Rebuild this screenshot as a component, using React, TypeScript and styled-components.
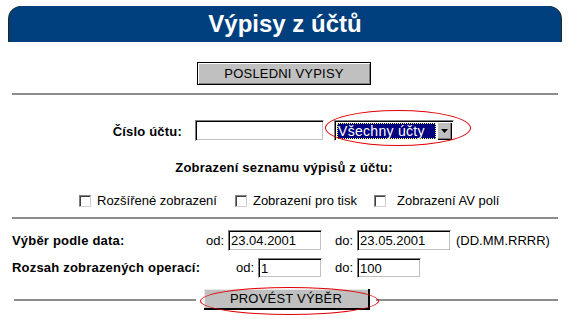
import React from "react";
import styled, { createGlobalStyle } from "styled-components";

const Global = createGlobalStyle`
  html, body { margin: 0; padding: 0; background: #fff; }
  body { font-family: "Liberation Sans", Arial, sans-serif; color: #000; }
`;

const Page = styled.div`
  width: 568px;
  height: 319px;
  overflow: hidden;
  position: relative;
`;

const Header = styled.div`
  margin: 6px 7px 0 9px;
  height: 36px;
  background: #003f7e;
  border-radius: 13px 13px 0 0;
  box-shadow: -1px 0 0 #1b2b1b, 1px 0 0 #1b2b1b;
  display: flex;
  align-items: center;
  justify-content: center;
  color: #fff;
  font-weight: bold;
  font-size: 24px;
`;

const Center = styled.div<{ $top: number }>`
  display: flex;
  justify-content: center;
  align-items: center;
  margin-top: ${(p) => p.$top}px;
`;

const WinButton = styled.div<{ $w: number; $h: number }>`
  width: ${(p) => p.$w}px;
  height: ${(p) => p.$h}px;
  box-sizing: border-box;
  background: #c0c0c0;
  border: 1px solid #000;
  box-shadow: inset 1px 1px #fff, inset -1px -1px #808080;
  display: flex;
  align-items: center;
  justify-content: center;
  font-size: 13px;
  letter-spacing: 0.2px;
`;

const Rule = styled.div<{ $top: number }>`
  margin: ${(p) => p.$top}px 10px 0 12px;
  height: 0;
  border-top: 2px solid #8c8c8c;
`;

const Label = styled.span`
  font-weight: bold;
  font-size: 13px;
  letter-spacing: 0.2px;
  white-space: nowrap;
`;

const LabelBox = styled.div`
  width: 84px;
  margin-left: 98px;
  text-align: right;
`;

const Field = styled.div<{ $w: number; $h?: number }>`
  width: ${(p) => p.$w}px;
  height: ${(p) => p.$h ?? 21}px;
  box-sizing: border-box;
  background: #fff;
  border: 1px solid;
  border-color: #808080 #fff #fff #808080;
  box-shadow: inset 1px 1px #000, inset -1px -1px #c0c0c0;
  font-size: 13px;
  padding: 2px 0 0 2px;
  line-height: 16px;
`;

const Select = styled.div`
  width: 120px;
  height: 21px;
  box-sizing: border-box;
  border: 1px solid;
  border-color: #808080 #fff #fff #808080;
  box-shadow: inset 1px 1px #000;
  background: #fff;
  display: flex;
  padding: 2px 1px 1px 2px;
`;

const SelectValue = styled.div`
  flex: 1;
  background: #000080;
  color: #fff;
  font-size: 14px;
  line-height: 16px;
  padding-left: 1px;
  letter-spacing: 0.3px;
  outline: 1px dotted #ffff66;
  outline-offset: -1px;
  white-space: nowrap;
  overflow: hidden;
`;

const SelectArrow = styled.div`
  width: 15px;
  background: #c0c0c0;
  box-shadow: inset 1px 1px #fff, inset -1px -1px #000, inset -2px -2px #808080;
  display: flex;
  align-items: center;
  justify-content: center;
  margin: -1px 0 -1px 1px;
`;

const Ellipse = styled.div<{ $l: number; $t: number; $w: number; $h: number }>`
  position: absolute;
  left: ${(p) => p.$l}px;
  top: ${(p) => p.$t}px;
  width: ${(p) => p.$w}px;
  height: ${(p) => p.$h}px;
  border: 1px solid #e00000;
  border-radius: 50%;
  pointer-events: none;
`;

const AccountRow = styled.div`
  display: flex;
  align-items: center;
  margin-top: 25px;
  height: 21px;
`;

const Heading = styled.div`
  text-align: center;
  margin-top: 18px;
  line-height: 16px;
`;

const Checks = styled.div`
  display: flex;
  align-items: center;
  margin: 17px 0 0 79px;
  font-size: 13px;
`;

const Check = styled.span`
  width: 12px;
  height: 12px;
  box-sizing: border-box;
  border: 1px solid;
  border-color: #808080 #d0d0d0 #d0d0d0 #808080;
  box-shadow: inset 1px 1px #404040;
  background: #fff;
  display: inline-block;
`;

const CheckItem = styled.label<{ $gap: number; $after: number }>`
  display: flex;
  align-items: center;
  gap: ${(p) => p.$gap}px;
  margin-right: ${(p) => p.$after}px;
`;

const Grid = styled.div`
  display: grid;
  grid-template-columns: 188px 122px 131px auto;
  grid-auto-rows: 21px;
  row-gap: 6px;
  align-items: center;
  margin: 11px 0 0 12px;
  font-size: 13px;
`;

const RightCell = styled.div`
  display: flex;
  align-items: center;
  justify-content: flex-end;
  gap: 4px;
`;

const LeftCell = styled.div`
  display: flex;
  align-items: center;
  gap: 4px;
  padding-left: 13px;
`;

const Hint = styled.div`
  padding-left: 3px;
`;

const BottomBar = styled.div`
  display: flex;
  align-items: center;
  margin: 11px 10px 0 14px;
`;

const BarLine = styled.div`
  flex: 1;
  border-top: 2px solid #8c8c8c;
`;

const SubmitButton = styled.div`
  width: 166px;
  height: 21px;
  box-sizing: border-box;
  background: #c0c0c0;
  border-right: 2px solid #000;
  border-bottom: 2px solid #000;
  box-shadow: inset 1px 1px #e8e8e8;
  display: flex;
  align-items: center;
  justify-content: center;
  font-size: 13px;
  letter-spacing: 0.2px;
  margin: 0 6px 0 8px;
`;

export default function App() {
  return (
    <Page>
      <Global />
      <Header>Výpisy z účtů</Header>

      <Center $top={20}>
        <WinButton $w={174} $h={23}>POSLEDNI VYPISY</WinButton>
      </Center>

      <Rule $top={8} />

      <AccountRow>
        <LabelBox>
          <Label>Číslo účtu:</Label>
        </LabelBox>
        <Field $w={129} $h={21} style={{ marginLeft: 13 }} />
        <Select style={{ marginLeft: 10 }}>
          <SelectValue>Všechny účty</SelectValue>
          <SelectArrow>
            <svg width="7" height="4" viewBox="0 0 7 4">
              <path d="M0 0h7L3.5 4z" fill="#000" />
            </svg>
          </SelectArrow>
        </Select>
      </AccountRow>

      <Heading>
        <Label>Zobrazení seznamu výpisů z účtu:</Label>
      </Heading>

      <Checks>
        <CheckItem $gap={6} $after={18}>
          <Check />
          Rozšířené zobrazení
        </CheckItem>
        <CheckItem $gap={6} $after={17}>
          <Check />
          Zobrazení pro tisk
        </CheckItem>
        <CheckItem $gap={11} $after={0}>
          <Check />
          Zobrazení AV polí
        </CheckItem>
      </Checks>

      <Rule $top={9} />

      <Grid>
        <Label>Výběr podle data:</Label>
        <RightCell>
          od: <Field $w={94}>23.04.2001</Field>
        </RightCell>
        <LeftCell>
          do: <Field $w={94}>23.05.2001</Field>
        </LeftCell>
        <Hint>(DD.MM.RRRR)</Hint>

        <Label>Rozsah zobrazených operací:</Label>
        <RightCell>
          od: <Field $w={64} $h={20}>1</Field>
        </RightCell>
        <LeftCell>
          do: <Field $w={64} $h={20}>100</Field>
        </LeftCell>
        <div />
      </Grid>

      <BottomBar>
        <BarLine />
        <SubmitButton>PROVÉST VÝBĚR</SubmitButton>
        <BarLine />
      </BottomBar>

      <Ellipse $l={325} $t={110} $w={144} $h={34} />
      <Ellipse $l={200} $t={287} $w={177} $h={26} />
    </Page>
  );
}
